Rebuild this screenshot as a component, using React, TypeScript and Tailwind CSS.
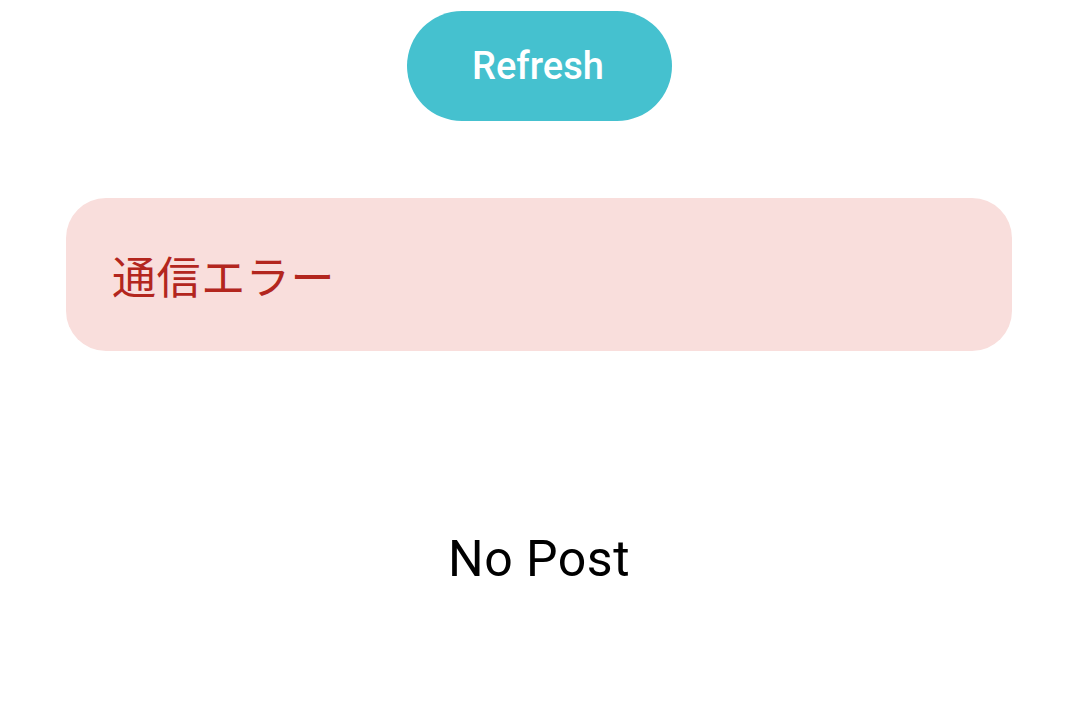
export default function App() {
  return (
    <div className="flex min-h-[704px] w-full flex-col items-center bg-white font-['Roboto',sans-serif]">
      <button
        type="button"
        className="mt-[11px] flex h-[110px] w-[265px] items-center justify-center rounded-full bg-[#45c1cf] pr-[2px] text-[38px] font-medium text-white"
      >
        Refresh
      </button>
      <div className="mx-[66px] mt-[77px] flex h-[153px] w-[946px] items-center rounded-[40px] bg-[#f9dedc] pl-[46px]">
        <span className="font-['Noto_Sans_CJK_JP',sans-serif] text-[44px] tracking-[0.6px] text-[#b3261e]">通信エラー</span>
      </div>
      <p className="mt-[183px] text-[50px] leading-none tracking-[0.5px] text-black">No Post</p>
    </div>
  );
}
